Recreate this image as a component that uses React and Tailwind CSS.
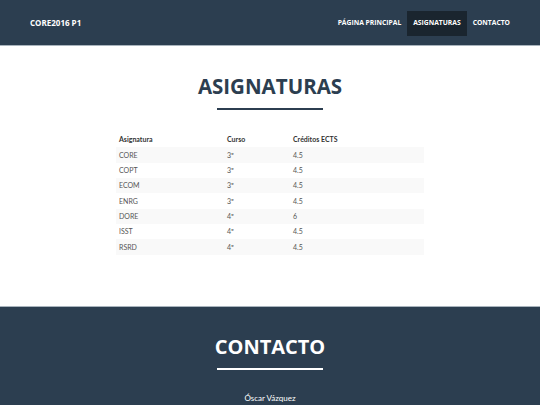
import React from "react";

const asignaturas = [
  { nombre: "CORE", curso: "3º", creditos: "4.5" },
  { nombre: "COPT", curso: "3º", creditos: "4.5" },
  { nombre: "ECOM", curso: "3º", creditos: "4.5" },
  { nombre: "ENRG", curso: "3º", creditos: "4.5" },
  { nombre: "DORE", curso: "4º", creditos: "6" },
  { nombre: "ISST", curso: "4º", creditos: "4.5" },
  { nombre: "RSRD", curso: "4º", creditos: "4.5" },
];

const heading = { fontFamily: '"Open Sans", "DejaVu Sans", sans-serif' };
const body = { fontFamily: 'Lato, "Liberation Sans", sans-serif' };

export default function App() {
  return (
    <div className="w-[540px] h-[405px] overflow-hidden bg-white">
      {/* navbar */}
      <nav
        className="h-[46px] bg-[#2c3e50] border-b border-[#a9b4bd] flex items-center justify-between pl-[30px] pr-[24px]"
        style={heading}
      >
        <span className="text-white font-bold text-[8px] leading-none">CORE2016 P1</span>
        <ul className="flex items-center mt-[1px]">
          <li className="h-[25px] px-[6px] flex items-center text-white font-bold text-[6.75px] leading-none">
            PÁGINA PRINCIPAL
          </li>
          <li className="h-[25px] px-[6px] flex items-center bg-[#1a252f] text-white font-bold text-[6.75px] leading-none">
            ASIGNATURAS
          </li>
          <li className="h-[25px] px-[6px] flex items-center text-white font-bold text-[6.75px] leading-none">
            CONTACTO
          </li>
        </ul>
      </nav>

      {/* asignaturas */}
      <section className="pt-[30px] pb-[51px] flex flex-col items-center">
        <h2 className="text-[20.5px] leading-[20px] font-bold text-[#2c3e50]" style={heading}>
          ASIGNATURAS
        </h2>
        <div className="mt-[11.5px] w-[106px] h-[2.4px] bg-[#2c3e50]" />

        <table className="mt-[22px] w-[308px] border-collapse text-[7px] text-[#555]" style={body}>
          <thead>
            <tr>
              <th className="w-[108px] h-[15.33px] p-0 pl-[3px] text-left font-bold text-[#333]">Asignatura</th>
              <th className="w-[66px] h-[15.33px] p-0 pl-[3px] text-left font-bold text-[#333]">Curso</th>
              <th className="h-[15.33px] p-0 pl-[3px] text-left font-bold text-[#333]">Créditos ECTS</th>
            </tr>
          </thead>
          <tbody>
            {asignaturas.map((a, i) => (
              <tr key={a.nombre} className={i % 2 === 0 ? "bg-[#f9f9f9]" : "bg-white"}>
                <td className="h-[15.33px] p-0 pl-[3px]">{a.nombre}</td>
                <td className="h-[15.33px] p-0 pl-[3px]">{a.curso}</td>
                <td className="h-[15.33px] p-0 pl-[3px]">{a.creditos}</td>
              </tr>
            ))}
          </tbody>
        </table>
      </section>

      {/* contacto */}
      <footer className="bg-[#2c3e50] border-t border-[#a9b4bd] pt-[30px] flex flex-col items-center">
        <h2 className="text-[20px] leading-[20px] font-bold text-white" style={heading}>
          CONTACTO
        </h2>
        <div className="mt-[11px] w-[106px] h-[2.4px] bg-white" />
        <p className="mt-[22px] text-[8px] leading-[12px] text-white" style={body}>
          Óscar Vázquez
        </p>
        <div className="h-[40px]" />
      </footer>
    </div>
  );
}
